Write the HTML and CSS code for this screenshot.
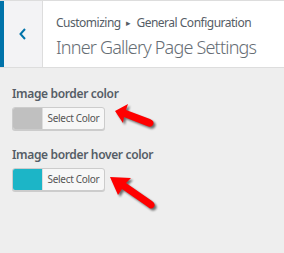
FILE: index.html
```html
<!DOCTYPE html>
<html lang="en">
<head>
  <meta charset="UTF-8">
  <title>Inner Gallery Page Settings</title>
  <link rel="stylesheet" href="styles.css">
</head>
<body>
  <div class="header">
    <button class="back" type="button" aria-label="Back">
      <svg width="10" height="12" viewBox="0 0 10 12"><path d="M7 1 L2.5 6 L7 11" fill="none" stroke="#0073aa" stroke-width="2"/></svg>
    </button>
    <div class="titles">
      <div class="crumb">Customizing <span class="sep">&#9656;</span> General Configuration</div>
      <div class="title">Inner Gallery Page Settings</div>
    </div>
  </div>

  <div class="content">
    <div class="field">
      <label class="label">Image border color</label>
      <button class="picker" type="button">
        <span class="swatch swatch-gray"></span>
        <span class="picker-text">Select Color</span>
      </button>
      <svg class="arrow arrow-one" width="50" height="30" viewBox="0 0 50 30">
        <g transform="translate(2 2)" fill="#000" opacity="0.55" style="filter: blur(1px)">
          <path d="M1 8 L14 1 L12 7 L36 16 Q41 18 39 22 Q37 25 33 23 L10 14 L9 20 Z"/>
        </g>
        <path d="M1 8 L14 1 L12 7 L36 16 Q41 18 39 22 Q37 25 33 23 L10 14 L9 20 Z" fill="#ff0000"/>
      </svg>
    </div>

    <div class="field">
      <label class="label">Image border hover color</label>
      <button class="picker" type="button">
        <span class="swatch swatch-teal"></span>
        <span class="picker-text">Select Color</span>
      </button>
      <svg class="arrow arrow-two" width="52" height="40" viewBox="0 0 52 40">
        <g transform="translate(2 2)" fill="#000" opacity="0.55" style="filter: blur(1px)">
          <path d="M1 1 L22 2 L17 7 L43 25 Q47 28 45 31 Q42 34 39 31 L13 13 L9 19 Z"/>
        </g>
        <path d="M1 1 L22 2 L17 7 L43 25 Q47 28 45 31 Q42 34 39 31 L13 13 L9 19 Z" fill="#ff0000"/>
      </svg>
    </div>
  </div>
</body>
</html>
```

FILE: styles.css
```css
body {
  margin: 0;
  background: #eeeeee;
  font-family: "Noto Sans", "Open Sans", sans-serif;
  color: #555d66;
}
.header {
  display: flex;
  height: 66px;
  background: #ffffff;
  border-top: 1px solid #dddddd;
  border-bottom: 1px solid #dddddd;
}
.back {
  flex: none;
  width: 43px;
  margin: 0;
  padding: 0;
  border: none;
  border-left: 4px solid #0073aa;
  border-right: 1px solid #dddddd;
  background: #f3f3f5;
  display: flex;
  align-items: center;
  justify-content: center;
}
.titles {
  padding: 13px 0 0 13px;
  white-space: nowrap;
}
.crumb {
  font-size: 12px;
  letter-spacing: -0.5px;
  line-height: 18px;
  color: #555d66;
}
.sep {
  font-size: 9px;
  vertical-align: 1px;
  padding: 0 3px;
}
.title {
  font-size: 18px;
  font-weight: 300;
  letter-spacing: -0.8px;
  line-height: 26px;
  color: #666d74;
  margin-top: 2px;
}
.content {
  padding: 17px 12px;
}
.field {
  position: relative;
  margin-bottom: 16px;
}
.label {
  display: block;
  font-size: 12px;
  font-weight: 600;
  letter-spacing: -0.35px;
  line-height: 18px;
  margin-bottom: 4px;
}
.picker {
  display: flex;
  height: 23px;
  width: 93px;
  margin: 0;
  padding: 0;
  border: 1px solid #cccccc;
  border-radius: 3px;
  background: #f7f7f7;
  overflow: hidden;
  box-shadow: 0 1px 0 #cccccc;
}
.swatch {
  width: 29px;
  height: 100%;
}
.swatch-gray {
  background: #c0c0c0;
}
.swatch-teal {
  background: #1cb5c7;
}
.picker-text {
  flex: 1;
  border-left: 1px solid #dddddd;
  font-family: "Noto Sans", "Open Sans", sans-serif;
  font-size: 10px;
  letter-spacing: -0.3px;
  line-height: 21px;
  color: #555555;
  text-align: center;
}
.arrow {
  position: absolute;
}
.arrow-one {
  left: 102px;
  top: 18px;
}
.arrow-two {
  left: 97px;
  top: 30px;
}
```
